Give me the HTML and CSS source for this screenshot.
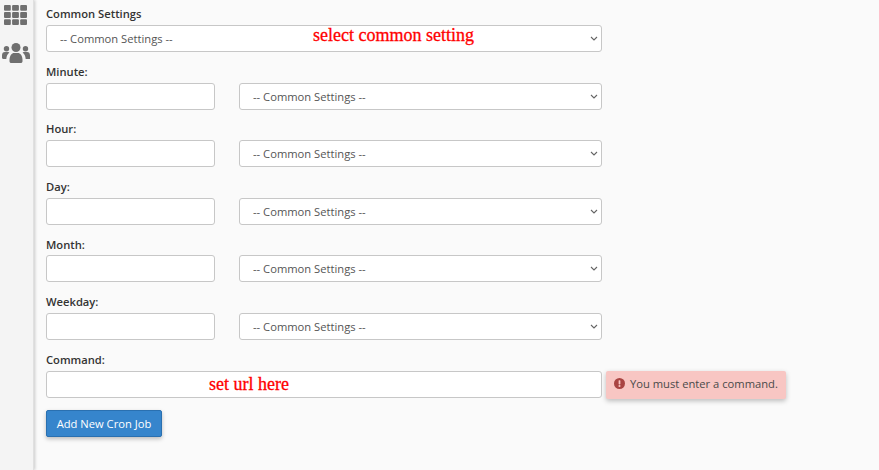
FILE: index.html
```html
<!DOCTYPE html>
<html lang="en">
<head>
<meta charset="utf-8">
<title>Add New Cron Job</title>
<link rel="stylesheet" href="styles.css">
</head>
<body>
<div class="page">
  <nav class="sidebar">
    <svg class="icon-grid" width="23" height="20" viewBox="0 0 23 20" aria-hidden="true">
      <g fill="#6f6f6f">
        <rect x="0" y="0" width="6.800" height="5.800" rx="1"/><rect x="8.100" y="0" width="6.800" height="5.800" rx="1"/><rect x="16.200" y="0" width="6.800" height="5.800" rx="1"/>
        <rect x="0" y="7.100" width="6.800" height="5.800" rx="1"/><rect x="8.100" y="7.100" width="6.800" height="5.800" rx="1"/><rect x="16.200" y="7.100" width="6.800" height="5.800" rx="1"/>
        <rect x="0" y="14.200" width="6.800" height="5.800" rx="1"/><rect x="8.100" y="14.200" width="6.800" height="5.800" rx="1"/><rect x="16.200" y="14.200" width="6.800" height="5.800" rx="1"/>
      </g>
    </svg>
    <svg class="icon-users" width="28" height="20" viewBox="0 0 28 20" aria-hidden="true">
      <g fill="#6f6f6f">
        <circle cx="14" cy="4.500" r="4.500"/>
        <circle cx="4.500" cy="5.800" r="2.700"/>
        <circle cx="23.500" cy="5.800" r="2.700"/>
        <path d="M7.500 17c0-4.500 2.500-7 4.500-7h4c2 0 4.500 2.500 4.500 7v1.200c0 1-.8 1.800-1.800 1.800H9.300c-1 0-1.800-.8-1.800-1.800z"/>
        <path d="M0 12.500c0-2.500 1.200-3.500 2.800-3.500h3.400c.5 0 .9.200 1.200.5-1.700 1.300-2.900 3.500-3.100 6.500H1.500C.6 16 0 15.400 0 14.500z"/>
        <path d="M28 12.500c0-2.500-1.200-3.500-2.800-3.500h-3.400c-.5 0-.9.200-1.200.5 1.700 1.300 2.900 3.500 3.100 6.500h3.800c.9 0 1.500-.6 1.500-1.500z"/>
      </g>
    </svg>
  </nav>
  <main class="content">
    <form class="cron-form">
      <div class="group">
        <label class="label">Common Settings</label>
        <div class="control-wrap">
          <select class="field field-full"><option>-- Common Settings --</option></select>
          <span class="note note-select">select common setting</span>
        </div>
      </div>
      <div class="group">
        <label class="label">Minute:</label>
        <div class="pair"><input class="field field-small" type="text"><select class="field field-pair"><option>-- Common Settings --</option></select></div>
      </div>
      <div class="group">
        <label class="label">Hour:</label>
        <div class="pair"><input class="field field-small" type="text"><select class="field field-pair"><option>-- Common Settings --</option></select></div>
      </div>
      <div class="group">
        <label class="label">Day:</label>
        <div class="pair"><input class="field field-small" type="text"><select class="field field-pair"><option>-- Common Settings --</option></select></div>
      </div>
      <div class="group">
        <label class="label">Month:</label>
        <div class="pair"><input class="field field-small" type="text"><select class="field field-pair"><option>-- Common Settings --</option></select></div>
      </div>
      <div class="group">
        <label class="label">Weekday:</label>
        <div class="pair"><input class="field field-small" type="text"><select class="field field-pair"><option>-- Common Settings --</option></select></div>
      </div>
      <div class="group">
        <label class="label">Command:</label>
        <div class="command-row">
          <div class="control-wrap">
            <input class="field field-full" type="text">
            <span class="note note-url">set url here</span>
          </div>
          <div class="alert">
            <svg width="11" height="11" viewBox="0 0 10 10" aria-hidden="true"><circle cx="5" cy="5" r="5" fill="#a94442"/><rect x="4.200" y="2" width="1.600" height="3.800" rx=".6" fill="#f8c6c3"/><circle cx="5" cy="7.300" r=".95" fill="#f8c6c3"/></svg>
            <span>You must enter a command.</span>
          </div>
        </div>
      </div>
      <button class="btn" type="button">Add New Cron Job</button>
    </form>
  </main>
</div>
</body>
</html>
```
FILE: styles.css
```css
* { box-sizing: border-box; }
html, body { margin: 0; height: 100%; overflow: hidden; }
body { background: #fafafa; font-family: "Open Sans", sans-serif; color: #333; }
.page { display: flex; height: 470px; }
.sidebar {
  width: 34px;
  flex: none;
  background: #f4f4f4;
  border-right: 1px solid #e0e0e0;
  box-shadow: 1px 0 3px rgba(0,0,0,.2);
  display: flex;
  flex-direction: column;
  padding: 5px 0 0 2px;
  gap: 18px;
}
.icon-grid { margin-left: 2px; }
.content { flex: 1; padding: 0 0 0 12px; }
.cron-form { display: flex; flex-direction: column; width: 760px; }
.group { display: flex; flex-direction: column; height: 57.600px; padding-top: 6.300px; }
.label { font-size: 11.200px; line-height: 15px; font-weight: 540; color: #333; margin-bottom: 3.700px; display: block; }
.field {
  height: 27px;
  border: 1px solid #c7c7c7;
  border-radius: 3px;
  background: #fff;
  font-family: "Open Sans", sans-serif;
  font-size: 11.200px;
  color: #555;
  padding: 0 9px;
}
select.field {
  appearance: none;
  padding-left: 13px;
  background: #fff url("data:image/svg+xml,%3Csvg xmlns='http://www.w3.org/2000/svg' width='8' height='5' viewBox='0 0 8 5'%3E%3Cpath d='M1 1l3 3 3-3' fill='none' stroke='%23666' stroke-width='1.100'/%3E%3C/svg%3E") no-repeat right 3px center;
}
.field-full { width: 556px; display: block; }
.field-small { width: 169px; }
.field-pair { width: 363px; }
.pair { display: flex; gap: 24px; }
.control-wrap { position: relative; width: 556px; }
.note { position: absolute; font-family: "Liberation Serif", serif; font-size: 18px; line-height: 20px; color: #f00; white-space: nowrap; -webkit-text-stroke: .3px #f00; }
.note-select { left: 267px; top: 0; }
.note-url { left: 163px; top: 3px; }
.command-row { display: flex; gap: 4px; align-items: flex-start; }
.alert {
  display: flex;
  align-items: center;
  gap: 5px;
  width: 180px;
  height: 28px;
  padding: 0 8px 2px;
  background: #f8c6c3;
  border-radius: 2px;
  box-shadow: 0 2px 5px rgba(0,0,0,.25);
  font-size: 11.200px;
  color: #4a4a4a;
  white-space: nowrap;
}
.btn {
  align-self: flex-start;
  width: 116px;
  height: 27px;
  margin-top: 7px;
  background: #3685cc;
  border: 1px solid #2a70b0;
  border-radius: 2px;
  box-shadow: 0 2px 4px rgba(0,0,0,.25);
  color: #fff;
  font-family: "Open Sans", sans-serif;
  font-size: 11.200px;
  padding: 0;
}
```
